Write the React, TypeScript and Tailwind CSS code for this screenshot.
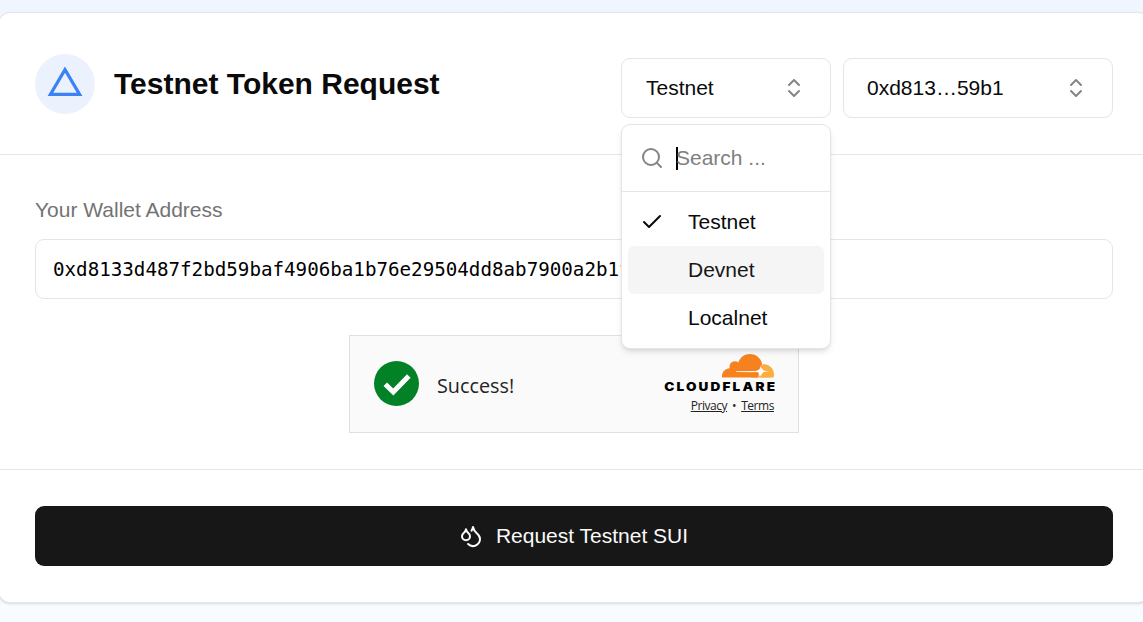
import { Check, ChevronsUpDown, Droplets, Search } from "lucide-react";

const networks = ["Testnet", "Devnet", "Localnet"];

function CloudflareLogo() {
  return (
    <svg width="112" height="42" viewBox="0 0 112 42" className="block overflow-visible">
      <g transform="translate(59 -10.2) scale(2.167)">
        <path
          fill="#f6821f"
          d="M16.5088 16.8447c.1475-.5068.0908-.9707-.1553-1.3154-.2246-.3164-.6045-.499-1.0615-.5205l-8.6592-.1123a.1559.1559 0 0 1-.1333-.0713c-.0283-.042-.0351-.0986-.021-.1553.0278-.084.1123-.1484.2036-.1562l8.7359-.1123c1.0351-.0489 2.1601-.8868 2.5537-1.9136l.499-1.3013c.0215-.0561.0293-.1128.0147-.168-.5625-2.5463-2.835-4.4453-5.5499-4.4453-2.5039 0-4.6284 1.6177-5.3876 3.8614-.4927-.3658-1.1187-.5625-1.794-.499-1.2026.119-2.1665 1.083-2.2861 2.2856-.0283.31-.0069.6128.0635.894C1.5683 13.171 0 14.7754 0 16.752c0 .1748.0142.3515.0352.5273.0141.083.0844.1475.1689.1475h15.9814c.0909 0 .1758-.0645.2032-.1553l.12-.4268z"
        />
        <path
          fill="#fbad41"
          d="M19.2656 11.2813c-.0771 0-.1611 0-.2383.0112-.0566 0-.1054.0415-.127.0976l-.3378 1.1744c-.1475.5068-.0918.9707.1543 1.3164.2256.3164.6055.498 1.0625.5195l1.8437.1133c.0557 0 .1055.0263.1329.0703.0283.043.0351.1074.0214.1562-.0283.084-.1132.1485-.204.1553l-1.921.1123c-1.041.0488-2.1582.8867-2.5527 1.914l-.1406.3585c-.0283.0713.0215.1416.0986.1416h6.5977c.0771 0 .1474-.0489.169-.126.1122-.4082.1757-.837.1757-1.2803 0-2.6025-2.125-4.727-4.7344-4.727"
        />
        <path
          fill="#f6821f"
          d="M14.6 14.3 L18.9 11.5 L18.4 13.1 L17.3 14.2 Z M14.4 14.95 L17 15 L16.9 17.42 H13.5 Z"
        />
        <path
          fill="#fbad41"
          d="M18.7 11.35 L20.4 11.5 L22.4 14.6 L19.2 14.2 L18.3 12.7 Z M19.2 14.8 L22.4 14.5 V17.42 H17.3 L17.9 15.6 Z"
        />
        <path
          fill="#fff"
          d="M17.9 12 Q18.25 14.15 20.4 14.5 Q18.25 14.85 17.9 17 Q17.55 14.85 15.4 14.5 Q17.55 14.15 17.9 12 Z"
        />
      </g>
      <text
        transform="translate(1.2 41) scale(1.13 1)"
        textLength="98"
        lengthAdjust="spacing"
        className="fill-black font-['Inter'] text-[12px] font-black"
      >
        CLOUDFLARE
      </text>
    </svg>
  );
}

function NetworkMenu() {
  return (
    <div className="absolute -left-px top-[65px] z-10 h-[225px] w-[210px] rounded-[9px] border border-[#e5e5e5] bg-white shadow-md">
      <div className="flex h-[67px] items-center border-b border-[#e5e5e5] px-[18px]">
        <Search className="size-6 text-[#858585]" strokeWidth={2} />
        <span className="ml-3 h-[23px] w-0.5 bg-black" />
        <span className="-ml-0.5 leading-7 text-[#808080]">Search ...</span>
      </div>
      <div className="p-1.5">
        {networks.map((name) => (
          <div
            key={name}
            className={`flex h-12 items-center gap-6 rounded-md pl-3 ${
              name === "Devnet" ? "bg-[#f5f5f5] text-[#171717]" : ""
            }`}
          >
            <Check
              className={`size-6 ${name === "Testnet" ? "" : "opacity-0"}`}
              strokeWidth={2}
            />
            {name}
          </div>
        ))}
      </div>
    </div>
  );
}

export default function App() {
  return (
    <div className="h-[622px] overflow-hidden bg-linear-to-b from-[#eff6ff] to-[#f8fbff] pt-3 font-['Liberation_Sans',sans-serif] text-[21px] text-[#0a0a0a]">
      <main className="-ml-0.5 w-[1152px] rounded-xl border border-[#e5e5e5] bg-white shadow-sm">
        <header className="flex h-[142px] items-start border-b border-[#e5e5e5] px-9 pt-[41px]">
          <div className="flex size-[60px] items-center justify-center rounded-full bg-[#ebf2fe]">
            <svg width="36" height="32" viewBox="0 0 36 32" className="-mt-1 fill-none stroke-[#3b82f6] stroke-[3.2]">
              <path d="M18 3.6 L32.6 28.4 H3.4 Z" />
            </svg>
          </div>
          <h1 className="ml-[19px] text-[30px] leading-[60px] font-bold">
            Testnet Token Request
          </h1>
          <div className="mt-1 ml-auto flex gap-3">
            <div className="relative flex h-[60px] w-[210px] items-center justify-between rounded-[9px] border border-[#e5e5e5] px-6">
              Testnet
              <ChevronsUpDown className="size-6 text-[#858585]" />
              <NetworkMenu />
            </div>
            <div className="flex h-[60px] w-[270px] items-center justify-between rounded-[9px] border border-[#e5e5e5] pr-6 pl-[23px]">
              0xd813…59b1
              <ChevronsUpDown className="size-6 text-[#858585]" />
            </div>
          </div>
        </header>
        <section className="flex h-[315px] flex-col border-b border-[#e5e5e5] px-9 pt-9">
          <label className="mt-1 leading-[30px] text-[#737373]">Your Wallet Address</label>
          <div className="mt-[14px] flex h-[60px] shrink-0 items-center overflow-hidden rounded-[9px] border border-[#e5e5e5] px-[17px] pt-0.5 font-['DejaVu_Sans_Mono',monospace] text-[19.2px] text-black">
            0xd8133d487f2bd59baf4906ba1b76e29504dd8ab7900a2b1f
          </div>
          <div className="mt-9 flex h-[98px] w-[450px] shrink-0 items-start self-center border border-[#e0e0e0] bg-[#fafafa] pr-[23px] pl-6 font-['Open_Sans',sans-serif]">
            <svg width="45" height="45" viewBox="0 0 45 45" className="mt-[25px]">
              <circle cx="22.5" cy="22.5" r="22.5" fill="#038127" />
              <path d="M11.3 23.2 L19.3 31 L34.8 15" fill="none" stroke="white" strokeWidth="5" />
            </svg>
            <span className="mt-[35px] ml-[18px] text-[19.8px] leading-[30px] text-[#232323]">Success!</span>
            <div className="mt-[14px] ml-auto flex flex-col items-end">
              <CloudflareLogo />
              <div className="mt-[5px] flex gap-[5px] pr-px text-[12px] leading-[18px] tracking-[-0.45px] text-[#232323]">
                <span className="underline underline-offset-1">Privacy</span>
                <span>•</span>
                <span className="underline underline-offset-1">Terms</span>
              </div>
            </div>
          </div>
        </section>
        <footer className="px-9 py-9">
          <button className="flex h-[60px] w-full items-center justify-center gap-[13px] rounded-[9px] bg-[#171717] pr-px text-[#fafafa]">
            <Droplets className="size-6" />
            Request Testnet SUI
          </button>
        </footer>
      </main>
    </div>
  );
}
